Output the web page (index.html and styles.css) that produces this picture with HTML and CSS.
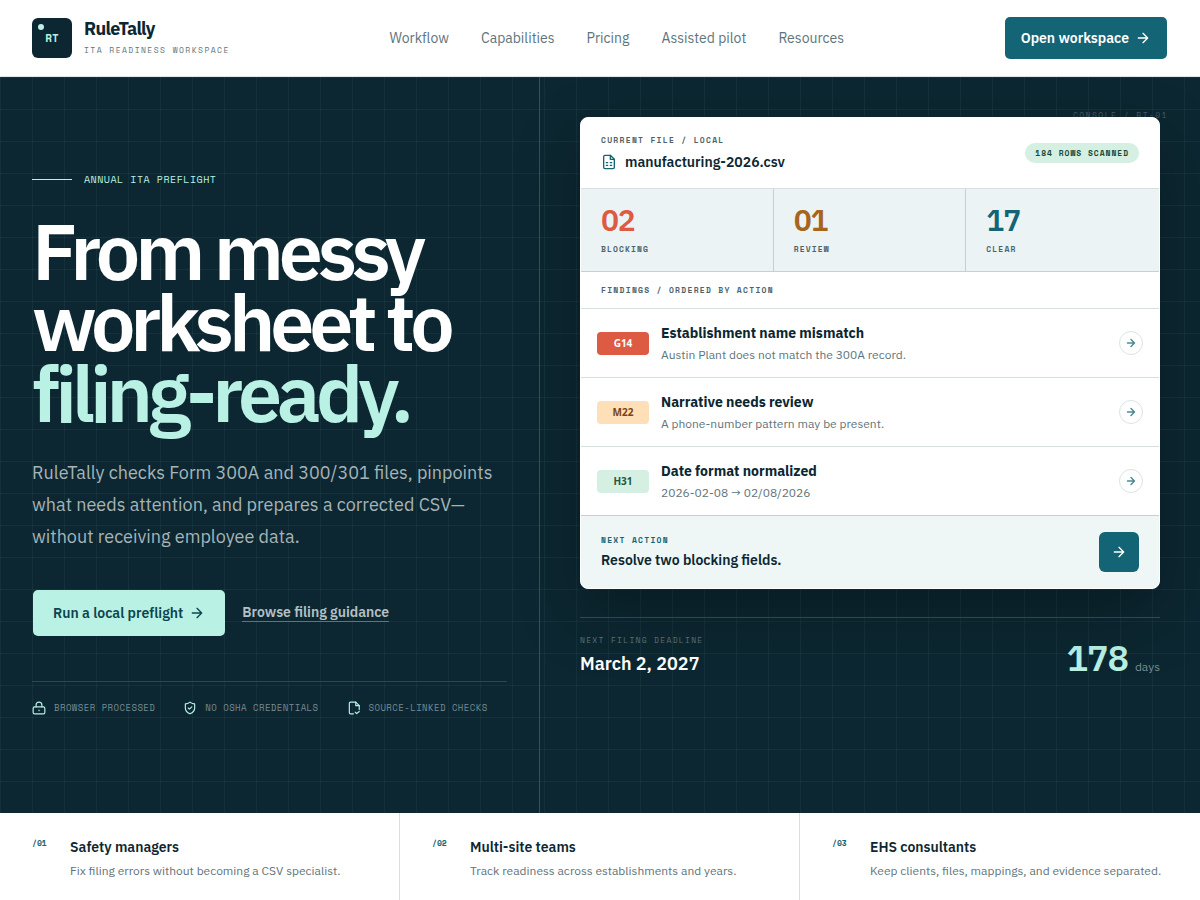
FILE: index.html
```html
<!DOCTYPE html>
<html lang="en">
<head>
  <meta charset="UTF-8">
  <title>RuleTally - ITA readiness workspace</title>
  <meta name="viewport" content="width=device-width, initial-scale=1.0">
  <link rel="stylesheet" href="styles.css">
</head>
<body>

  <!-- shared icons -->
  <svg class="sprite" aria-hidden="true">
    <symbol id="arrow" viewBox="0 0 24 24"><path d="M5 12h14M12 5l7 7-7 7"/></symbol>
    <symbol id="lock" viewBox="0 0 24 24"><rect x="2" y="10" width="20" height="12" rx="2.5"/><path d="M7 10V7a5 5 0 0 1 10 0v3"/><path d="M12 15.500v1"/></symbol>
    <symbol id="shield" viewBox="0 0 24 24"><path d="M12 2c2.500 2 5 3 8 3v7c0 5-3.500 8-8 10-4.500-2-8-5-8-10V5c3 0 5.500-1 8-3z"/><path d="M9 12l2 2 4-4"/></symbol>
    <symbol id="file-check" viewBox="0 0 24 24"><path d="M11 22H6a2 2 0 0 1-2-2V4a2 2 0 0 1 2-2h9l6 6v7"/><path d="M15 2v6h6"/><path d="M14 19l2.500 2.500L21 18"/></symbol>
    <symbol id="sheet" viewBox="0 0 24 24"><path d="M14 2H6a2 2 0 0 0-2 2v16a2 2 0 0 0 2 2h12a2 2 0 0 0 2-2V8z"/><path d="M14 2v6h6"/><path d="M8 13h2M14 13h2M8 17h2M14 17h2"/></symbol>
  </svg>

  <header class="site-header">
    <a class="brand" href="#">
      <span class="brand-mark">RT</span>
      <span class="brand-text">
        <strong class="brand-name">RuleTally</strong>
        <span class="brand-tag">ITA READINESS WORKSPACE</span>
      </span>
    </a>
    <nav class="site-nav">
      <a href="#">Workflow</a>
      <a href="#">Capabilities</a>
      <a href="#">Pricing</a>
      <a href="#">Assisted pilot</a>
      <a href="#">Resources</a>
    </nav>
    <a class="button button-teal" href="#">Open workspace <svg class="icon"><use href="#arrow"/></svg></a>
  </header>

  <main class="hero">
    <section class="intro">
      <p class="eyebrow">ANNUAL ITA PREFLIGHT</p>
      <h1>From messy worksheet to <em>filing-ready.</em></h1>
      <p class="lead">RuleTally checks Form 300A and 300/301 files, pinpoints what needs attention, and prepares a corrected CSV—without receiving employee data.</p>
      <div class="actions">
        <a class="button button-mint" href="#">Run a local preflight <svg class="icon"><use href="#arrow"/></svg></a>
        <a class="text-link" href="#">Browse filing guidance</a>
      </div>
      <ul class="trust">
        <li><svg class="icon"><use href="#lock"/></svg>BROWSER PROCESSED</li>
        <li><svg class="icon"><use href="#shield"/></svg>NO OSHA CREDENTIALS</li>
        <li><svg class="icon"><use href="#file-check"/></svg>SOURCE-LINKED CHECKS</li>
      </ul>
    </section>

    <section class="preview">
      <span class="console-label">CONSOLE / RT-01</span>
      <div class="card">
        <div class="card-head">
          <div>
            <p class="label">CURRENT FILE / LOCAL</p>
            <p class="file-name"><svg class="icon"><use href="#sheet"/></svg>manufacturing-2026.csv</p>
          </div>
          <span class="pill">184 ROWS SCANNED</span>
        </div>
        <div class="stats">
          <div class="stat stat-red"><strong>02</strong><span class="label">BLOCKING</span></div>
          <div class="stat stat-amber"><strong>01</strong><span class="label">REVIEW</span></div>
          <div class="stat stat-teal"><strong>17</strong><span class="label">CLEAR</span></div>
        </div>
        <p class="label findings-title">FINDINGS / ORDERED BY ACTION</p>
        <ul class="findings">
          <li>
            <span class="code code-red">G14</span>
            <div class="finding-text"><h3>Establishment name mismatch</h3><p>Austin Plant does not match the 300A record.</p></div>
            <button class="round" type="button" aria-label="Open G14"><svg class="icon"><use href="#arrow"/></svg></button>
          </li>
          <li>
            <span class="code code-amber">M22</span>
            <div class="finding-text"><h3>Narrative needs review</h3><p>A phone-number pattern may be present.</p></div>
            <button class="round" type="button" aria-label="Open M22"><svg class="icon"><use href="#arrow"/></svg></button>
          </li>
          <li>
            <span class="code code-green">H31</span>
            <div class="finding-text"><h3>Date format normalized</h3><p>2026-02-08 → 02/08/2026</p></div>
            <button class="round" type="button" aria-label="Open H31"><svg class="icon"><use href="#arrow"/></svg></button>
          </li>
        </ul>
        <div class="next">
          <div>
            <p class="label label-teal">NEXT ACTION</p>
            <p class="next-text">Resolve two blocking fields.</p>
          </div>
          <button class="square" type="button" aria-label="Next action"><svg class="icon"><use href="#arrow"/></svg></button>
        </div>
      </div>
      <div class="deadline">
        <div>
          <p class="deadline-label">NEXT FILING DEADLINE</p>
          <p class="deadline-date">March 2, 2027</p>
        </div>
        <p class="countdown"><strong>178</strong> days</p>
      </div>
    </section>
  </main>

  <section class="audiences">
    <article><span class="num">/01</span><div><h2>Safety managers</h2><p>Fix filing errors without becoming a CSV specialist.</p></div></article>
    <article><span class="num">/02</span><div><h2>Multi-site teams</h2><p>Track readiness across establishments and years.</p></div></article>
    <article><span class="num">/03</span><div><h2>EHS consultants</h2><p>Keep clients, files, mappings, and evidence separated.</p></div></article>
  </section>

</body>
</html>
```
FILE: styles.css
```css
:root {
  --ink: #0c2731;
  --teal: #136474;
  --mint: #b9f2e5;
  --muted: #60747b;
  --line: #d8dfe0;
  --sans: "IBM Plex Sans", "Noto Sans", sans-serif;
  --mono: "Space Mono", "Liberation Mono", monospace;
}

* {
  box-sizing: border-box;
}

body {
  margin: 0;
  min-height: 100vh;
  display: flex;
  flex-direction: column;
  font-family: var(--sans);
  font-size: 14px;
  color: var(--ink);
  background: #fff;
}

h1, h2, h3, p, ul {
  margin: 0;
  padding: 0;
}

ul {
  list-style: none;
}

a {
  color: inherit;
  text-decoration: none;
}

.sprite {
  position: absolute;
  width: 0;
  height: 0;
}

.icon {
  flex: none;
  width: 16px;
  height: 16px;
  fill: none;
  stroke: currentColor;
  stroke-width: 2;
  stroke-linecap: round;
  stroke-linejoin: round;
}

/* header */
.site-header {
  display: flex;
  align-items: center;
  justify-content: space-between;
  padding: 16px 32px;
  border-bottom: 1px solid #dbe7e9;
}

.brand {
  display: flex;
  align-items: center;
  gap: 12px;
}

.brand-mark {
  position: relative;
  display: grid;
  place-items: center;
  width: 40px;
  height: 40px;
  border-radius: 6px;
  background: var(--ink);
  color: var(--mint);
  font: bold 11px/16px var(--mono);
}

.brand-mark::before {
  content: "";
  position: absolute;
  top: 6px;
  left: 6px;
  width: 6px;
  height: 6px;
  border-radius: 50%;
  background: var(--mint);
}

.brand-text {
  display: flex;
  flex-direction: column;
  gap: 2px;
}

.brand-name {
  font-size: 18px;
  line-height: 22px;
  letter-spacing: -0.04em;
}

.brand-tag {
  font: 8px/16px var(--mono);
  letter-spacing: 0.18em;
  color: var(--muted);
}

.site-nav {
  display: flex;
  gap: 32px;
  line-height: 20px;
  color: var(--muted);
}

.button {
  display: inline-flex;
  align-items: center;
  gap: 6px;
  height: 44px;
  padding: 0 16px;
  border: 1px solid transparent;
  border-radius: 6px;
  background-clip: padding-box;
  font-weight: 600;
}

.button-teal {
  background-color: var(--teal);
  color: #fff;
}

.button-mint {
  height: 48px;
  padding: 0 20px;
  background-color: var(--mint);
  color: #0d4450;
}

/* hero */
.hero {
  flex: 1;
  display: grid;
  grid-template-columns: 45fr 55fr;
  background-color: var(--ink);
  background-image:
    linear-gradient(rgba(185, 242, 229, 0.05) 1px, transparent 1px),
    linear-gradient(90deg, rgba(185, 242, 229, 0.05) 1px, transparent 1px);
  background-size: 32px 32px;
  color: #fff;
}

.intro {
  display: flex;
  flex-direction: column;
  justify-content: center;
  padding: 40px 32px 43px;
  border-right: 1px solid #34505a;
}

.eyebrow {
  display: flex;
  align-items: center;
  gap: 12px;
  font: 10px/16px var(--mono);
  letter-spacing: 0.05em;
  color: var(--mint);
}

.eyebrow::before {
  content: "";
  width: 40px;
  height: 1px;
  background: var(--mint);
}

h1 {
  margin-top: 27px;
  font-size: 79px;
  font-weight: 600;
  line-height: 71px;
  letter-spacing: -0.065em;
}

h1 em {
  display: block;
  font-style: normal;
  color: var(--mint);
}

.lead {
  margin-top: 29px;
  font-size: 18px;
  line-height: 32px;
  color: #a6b4b8;
}

.actions {
  display: flex;
  align-items: center;
  gap: 16px;
  margin-top: 36px;
}

.text-link {
  border-bottom: 1px solid #5d757c;
  font-weight: 600;
  line-height: 18px;
  color: #b4c0c4;
}

.trust {
  display: flex;
  gap: 28px;
  margin-top: 44px;
  padding-top: 18px;
  border-top: 1px solid #2c4750;
  font: 9px/16px var(--mono);
  letter-spacing: 0.05em;
  color: #778b91;
}

.trust li {
  display: flex;
  align-items: center;
  gap: 8px;
}

.trust .icon {
  width: 14px;
  height: 14px;
  color: var(--mint);
}

.preview {
  position: relative;
  padding: 40px;
}

.console-label {
  position: absolute;
  top: 32px;
  right: 32px;
  font: 8px/12px var(--mono);
  letter-spacing: 0.18em;
  color: #455c65;
}

/* preview card */
.card {
  position: relative;
  border: 1px solid #fff;
  border-radius: 8px;
  overflow: hidden;
  background: #fff;
  color: var(--ink);
  box-shadow: 0 24px 64px rgba(0, 0, 0, 0.28);
}

.label {
  font: bold 8px/12px var(--mono);
  letter-spacing: 0.16em;
  color: #4d636a;
}

.label-teal {
  color: var(--teal);
}

.card-head {
  display: flex;
  align-items: center;
  justify-content: space-between;
  padding: 16px 20px;
}

.file-name {
  display: flex;
  align-items: center;
  gap: 8px;
  margin-top: 6px;
  font-weight: 600;
  line-height: 20px;
}

.file-name .icon {
  color: var(--teal);
}

.pill {
  padding: 4px 10px;
  border-radius: 10px;
  background: #d5efe2;
  color: #17493a;
  font: bold 8px/12px var(--mono);
  letter-spacing: 0.12em;
}

.stats {
  display: grid;
  grid-template-columns: repeat(3, 1fr);
  border-top: 1px solid var(--line);
  border-bottom: 1px solid #c6d0d3;
  background: #ebf3f4;
}

.stat {
  display: flex;
  flex-direction: column;
  gap: 8px;
  padding: 16px 20px;
  border-right: 1px solid #c6d0d3;
}

.stat:last-child {
  border-right: 0;
}

.stat strong {
  font-size: 30px;
  font-weight: 600;
  line-height: 30px;
  letter-spacing: -0.04em;
}

.stat .label {
  letter-spacing: 0.14em;
}

.stat-red strong { color: #dd5a43; }
.stat-amber strong { color: #a8641c; }
.stat-teal strong { color: var(--teal); }

.findings-title {
  padding: 12px 20px;
}

.findings li {
  display: flex;
  align-items: center;
  gap: 12px;
  padding: 12px 16px;
  border-top: 1px solid var(--line);
}

.code {
  width: 52px;
  border-radius: 4px;
  font: bold 10px/23px "Noto Sans", sans-serif;
  text-align: center;
}

.code-red { background: #dd5a43; color: #fff; }
.code-amber { background: #ffdfb8; color: #7d4311; }
.code-green { background: #d5efe2; color: #1f5840; }

.finding-text {
  flex: 1;
}

.finding-text h3 {
  font-size: 14px;
  font-weight: 700;
  line-height: 24px;
}

.finding-text p {
  font-size: 12px;
  line-height: 20px;
  color: var(--muted);
}

.round,
.square {
  display: grid;
  place-items: center;
  padding: 0;
}

.round {
  width: 24px;
  height: 24px;
  border: 1px solid #dbe3e4;
  border-radius: 50%;
  background: #fff;
  color: #4f8995;
}

.round .icon {
  width: 12px;
  height: 12px;
  stroke-width: 3;
}

.square {
  width: 40px;
  height: 40px;
  border: 0;
  border-radius: 6px;
  background: var(--teal);
  color: #fff;
}

.next {
  display: flex;
  align-items: center;
  justify-content: space-between;
  padding: 16px 20px;
  border-top: 1px solid #c6d0d3;
  background: #eef6f6;
}

.next-text {
  margin-top: 4px;
  font-weight: 600;
  line-height: 20px;
}

.deadline {
  display: flex;
  align-items: flex-start;
  justify-content: space-between;
  margin-top: 28px;
  padding-top: 16px;
  border-top: 1px solid #34505a;
}

.deadline-label {
  font: 8px/12px var(--mono);
  letter-spacing: 0.16em;
  color: #5f747b;
}

.deadline-date {
  margin-top: 6px;
  font-size: 18px;
  font-weight: 600;
  line-height: 24px;
}

.countdown {
  font-size: 12px;
  line-height: 48px;
  color: #7b8f95;
}

.countdown strong {
  margin-right: 4px;
  font-size: 36px;
  font-weight: 600;
  letter-spacing: -0.03em;
  color: var(--mint);
}

/* audience strip */
.audiences {
  display: grid;
  grid-template-columns: repeat(3, 1fr);
}

.audiences article {
  display: grid;
  grid-template-columns: 22px 1fr;
  gap: 16px;
  padding: 22px 32px 17px;
  border-right: 1px solid var(--line);
}

.audiences article:last-child {
  border-right: 0;
}

.num {
  font: bold 8px/16px var(--mono);
  color: var(--teal);
}

.audiences h2 {
  font-size: 14px;
  font-weight: 600;
  line-height: 24px;
}

.audiences p {
  font-size: 12px;
  line-height: 24px;
  color: var(--muted);
}
```
